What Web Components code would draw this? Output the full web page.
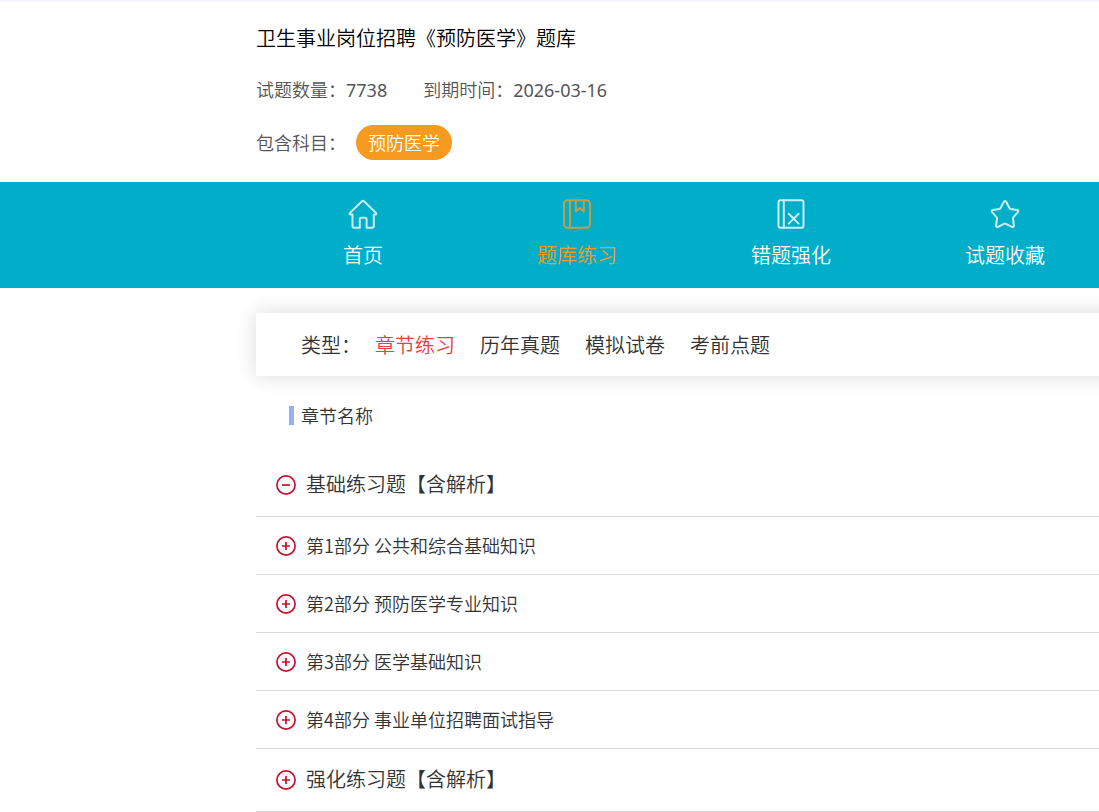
<!DOCTYPE html>
<html lang="zh-CN">
<head>
<meta charset="utf-8">
<meta name="viewport" content="width=device-width, initial-scale=1">
<title>卫生事业岗位招聘《预防医学》题库</title>
<style>
   body {
      --gutter: 256px;
      --brand: #00aeca;
      --active: #f79a20;
      --line: #d9d9d9;
      margin: 0;
      overflow-x: hidden;
      background: #fff;
      color: #333;
      font: 350 18px/26px "Noto Sans CJK SC", sans-serif;
   }
</style>
</head>
<body>

<bank-header expires="2026-03-16" count="7738">
   卫生事业岗位招聘《预防医学》题库
   <span slot="subject">预防医学</span>
</bank-header>

<bank-nav>
   <nav-item icon="home">首页</nav-item>
   <nav-item icon="book" active>题库练习</nav-item>
   <nav-item icon="wrong">错题强化</nav-item>
   <nav-item icon="star">试题收藏</nav-item>
</bank-nav>

<type-filter label="类型：">
   <filter-link active>章节练习</filter-link>
   <filter-link>历年真题</filter-link>
   <filter-link>模拟试卷</filter-link>
   <filter-link>考前点题</filter-link>
</type-filter>

<chapter-list heading="章节名称">
   <chapter-row top open>基础练习题【含解析】</chapter-row>
   <chapter-row>第1部分 公共和综合基础知识</chapter-row>
   <chapter-row>第2部分 预防医学专业知识</chapter-row>
   <chapter-row>第3部分 医学基础知识</chapter-row>
   <chapter-row>第4部分 事业单位招聘面试指导</chapter-row>
   <chapter-row top>强化练习题【含解析】</chapter-row>
</chapter-list>

<script>
   const define = ( name, build ) => {
      customElements.define( name, class extends HTMLElement {
         constructor() { super();
            const templateEl = document.createElement( 'template' );
            templateEl.innerHTML = build( this );
            this.attachShadow( {mode: 'open'} )
               .appendChild( templateEl.content.cloneNode( true ) );
         }
      })
   }

   const icons = {
      home: `<path d="M4.5 15.5 H2.6 C1.5 15.5 1.3 14.6 2 13.9 L14 2.3 C14.7 1.7 15.3 1.7 16 2.3 L28 13.9 C28.7 14.6 28.5 15.5 27.4 15.5 H25.8 V27 C25.8 28 25.2 28.7 24.2 28.7 H18.6 V20.3 C18.6 19.2 18 18.7 17 18.7 H13.4 C12.4 18.7 11.8 19.2 11.8 20.3 V28.7 H6.2 C5.2 28.7 4.5 28 4.5 27 Z"/>`,
      book: `<rect x="2" y="1.2" width="26" height="27.6" rx="3.5"/><path d="M8 1.2 V28.8 M13.8 1.2 V12.5 L17.8 9 L21.8 12.5 V1.2"/>`,
      wrong: `<rect x="2.5" y="1.2" width="25" height="27.6" rx="2"/><path d="M7.8 1.2 V28.8 M12.8 14.8 L22.6 24.6 M22.6 14.8 L12.8 24.6"/>`,
      star: `<path d="M13.7 3 Q15 1 16.3 3 L19.4 9 Q19.8 9.8 20.7 10 L26.9 11 Q29.2 11.6 27.7 13.4 L23.5 18.2 Q22.8 18.9 23 19.8 L23.9 26.3 Q24 28.6 21.9 27.8 L16 24.8 Q15 24.3 14 24.8 L8.1 27.8 Q6 28.6 6.1 26.3 L7 19.8 Q7.2 18.9 6.5 18.2 L2.3 13.4 Q.8 11.6 3.1 11 L9.3 10 Q10.2 9.8 10.6 9 Z"/>`
   }

   define( 'bank-header', el => `
      <style>
         :host { display: block; border-top: 2px solid #f5f5ff; padding: 20px 20px 22px var(--gutter); color: #555; }
         h1 { margin: 0; color: #000; font-size: 20px; font-weight: inherit; line-height: 32px; }
         dl, dl div { display: flex; align-items: baseline; }
         dl { margin: 22px 0 0; gap: 36px; }
         dd { margin: 0; }
         .num { font-family: "Noto Sans", sans-serif; font-weight: 400; }
         .subject { gap: 10px; }
         .subject dd {
            padding: 4px 12px 5px;
            border-radius: 18px;
            background: var(--active);
            color: #fff;
         }
      </style>
      <h1><slot></slot></h1>
      <dl>
         <div><dt>试题数量：</dt><dd class="num">${ el.getAttribute( 'count' ) }</dd></div>
         <div><dt>到期时间：</dt><dd class="num">${ el.getAttribute( 'expires' ) }</dd></div>
      </dl>
      <dl><div class="subject"><dt>包含科目：</dt><dd><slot name="subject"></slot></dd></div></dl>` )

   define( 'bank-nav', () => `
      <style>
         :host { display: block; overflow: hidden; padding-left: var(--gutter); background: var(--brand); }
         nav { display: grid; grid-auto-flow: column; grid-auto-columns: 214px; }
      </style>
      <nav><slot></slot></nav>` )

   define( 'nav-item', el => `
      <style>
         :host { display: block; color: #fff; }
         :host([active]) { color: var(--active); }
         a {
            display: flex;
            flex-direction: column;
            align-items: center;
            gap: 11px;
            padding: 17px 0 18px;
            color: inherit;
            font-size: 20px;
            line-height: 30px;
            text-decoration: none;
         }
         svg { width: 30px; height: 30px; fill: none; stroke: currentColor; stroke-width: 2; stroke-linejoin: round; stroke-linecap: round; opacity: .8; }
      </style>
      <a href="#${ el.getAttribute( 'icon' ) }">
         <svg viewBox="0 0 30 30" aria-hidden="true">${ icons[ el.getAttribute( 'icon' ) ] }</svg>
         <span><slot></slot></span>
      </a>` )

   // the bar runs past the right edge of the window, so its shadow has no corner there
   define( 'type-filter', el => `
      <style>
         :host {
            display: flex;
            align-items: center;
            gap: 14px;
            margin: 25px -24px 0 var(--gutter);
            padding: 17px 45px 16px;
            background: #fff;
            box-shadow: 0 0 20px rgba(0, 0, 0, .15);
            font-size: 20px;
            line-height: 30px;
            white-space: nowrap;
         }
         nav { display: flex; gap: 25px; }
      </style>
      <span>${ el.getAttribute( 'label' ) }</span>
      <nav><slot></slot></nav>` )

   define( 'filter-link', () => `
      <style>
         :host { display: block; }
         :host([active]) { color: #e8403c; }
         a { color: inherit; text-decoration: none; }
      </style>
      <a href="#type"><slot></slot></a>` )

   define( 'chapter-list', el => `
      <style>
         :host { display: block; margin-left: var(--gutter); }
         h2 {
            display: flex;
            align-items: center;
            gap: 7px;
            margin: 0;
            padding: 26px 33px 26px;
            font-size: 18px;
            font-weight: inherit;
         }
         h2::before { content: ""; width: 5px; height: 19px; background: #93aeff; }
      </style>
      <h2>${ el.getAttribute( 'heading' ) }</h2>
      <slot></slot>` )

   define( 'chapter-row', el => `
      <style>
         :host { display: block; border-bottom: 1px solid var(--line); }
         button {
            display: flex;
            align-items: center;
            gap: 10px;
            width: 100%;
            height: 57px;
            padding: 0 20px;
            border: 0;
            background: none;
            color: inherit;
            font: inherit;
            text-align: left;
            cursor: pointer;
         }
         :host([top]) button { height: 62px; font-size: 20px; }
         svg { flex: none; width: 20px; height: 20px; fill: none; stroke: #c8102e; stroke-width: 1.7; }
         span { padding-bottom: 2px; }
      </style>
      <button type="button" aria-expanded="${ el.hasAttribute( 'open' ) }">
         <svg viewBox="0 0 20 20" aria-hidden="true">
            <circle cx="10" cy="10" r="9.1"/>
            <path d="${ el.hasAttribute( 'open' ) ? 'M6 10 H14' : 'M6 10 H14 M10 6 V14' }"/>
         </svg>
         <span><slot></slot></span>
      </button>` )
</script>
</body>
</html>
